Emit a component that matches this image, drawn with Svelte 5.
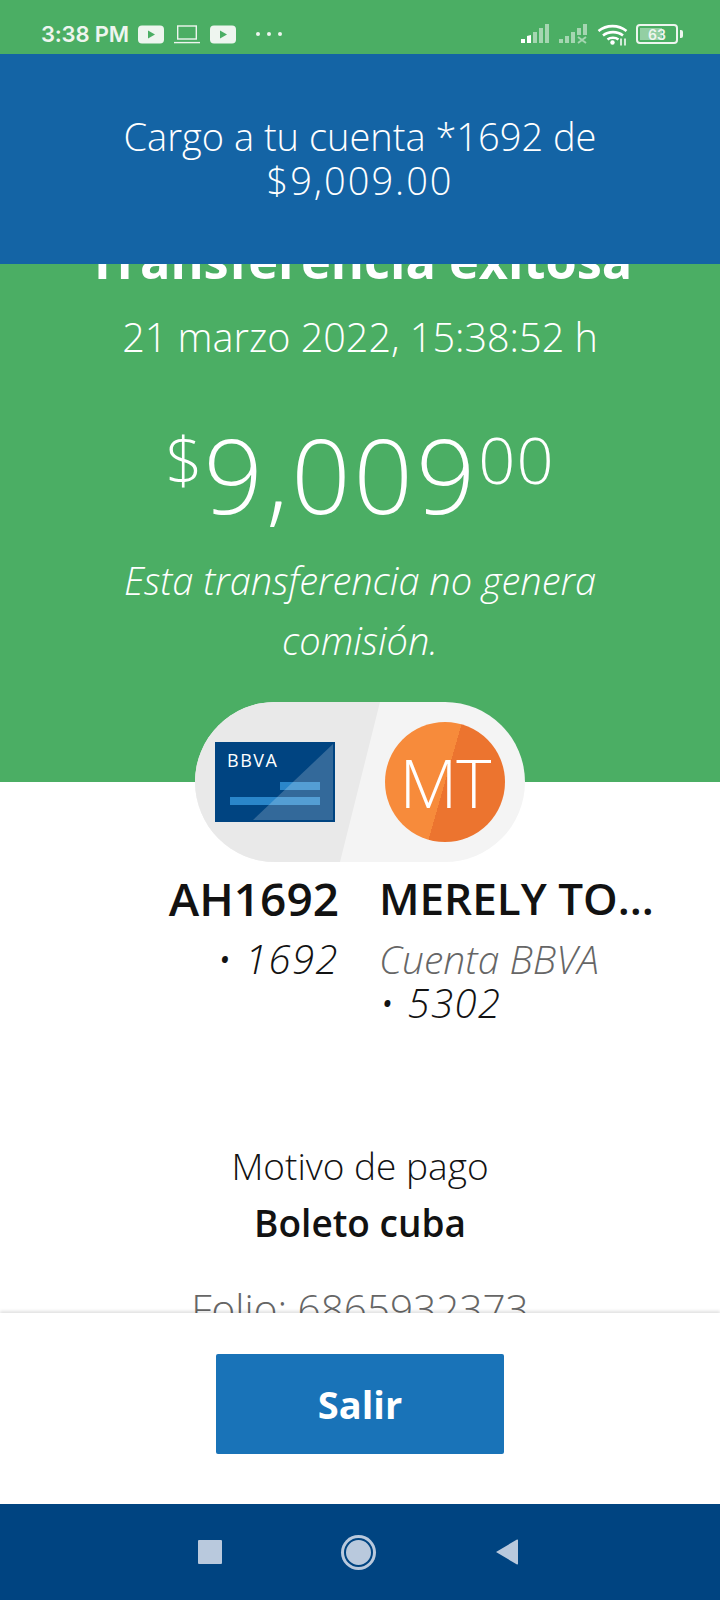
<script lang="ts">
  const title = "Transferencia exitosa";
</script>

<div class="screen">
  <header class="status">
    <span class="time">3:38 PM</span>
    <svg class="yt" viewBox="0 0 26 19"><rect width="26" height="18" y="0.5" rx="4" fill="#eef5ef" /><path d="M10 5.5l7 4-7 4z" fill="#4bae64" /></svg>
    <svg class="yt" viewBox="0 0 26 19" fill="none" stroke="#eef5ef" stroke-width="1.4"><rect x="3.7" y="1" width="18.6" height="13" /><path d="M0 17.6h26" /></svg>
    <svg class="yt" viewBox="0 0 26 19"><rect width="26" height="18" y="0.5" rx="4" fill="#eef5ef" /><path d="M10 5.5l7 4-7 4z" fill="#4bae64" /></svg>
    <span class="dots"><i></i><i></i><i></i></span>
    <span class="spacer"></span>
    <svg class="sig" viewBox="0 0 28 20">
      <rect x="0" y="15" width="4" height="4" fill="#fff" />
      <path d="M6 19v-7l4-1v8z" fill="#fff" />
      <rect x="12" y="8" width="4" height="11" fill="#a5d6b1" />
      <rect x="18" y="4" width="4" height="15" fill="#a5d6b1" />
      <rect x="24" y="0" width="4" height="19" fill="#a5d6b1" />
    </svg>
    <svg class="sig" viewBox="0 0 28 20">
      <rect x="0" y="15" width="4" height="4" fill="#a5d6b1" />
      <rect x="6" y="12" width="4" height="7" fill="#a5d6b1" />
      <rect x="12" y="8" width="4" height="11" fill="#a5d6b1" />
      <rect x="18" y="4" width="4" height="7" fill="#a5d6b1" />
      <rect x="24" y="0" width="4" height="11" fill="#a5d6b1" />
      <path d="M19 13l8 6M27 13l-8 6" stroke="#a5d6b1" stroke-width="2" />
    </svg>
    <svg class="wifi" viewBox="0 0 32 22" fill="none" stroke="#fff" stroke-width="2.6">
      <path d="M1.5 7.5c8-6.500 20-6.500 28 0" />
      <path d="M6 12c5.500-4.500 14.500-4.500 20 0" />
      <path d="M10.500 16c2.800-2.300 8-2.300 11 0" />
      <circle cx="15.500" cy="19" r="2.200" fill="#fff" stroke="none" />
      <path d="M24 15v7M28 15v7" stroke-width="1.500" />
    </svg>
    <span class="battery"><span class="level"></span><span class="pct">63</span></span>
    <span class="nub"></span>
  </header>

  <main class="content">
    <div class="toast">Cargo a tu cuenta *1692 de<br /><span class="toast-amount">$9,009.00</span></div>

    <section class="hero">
      <h1>{title}</h1>
      <p class="date">21 marzo 2022, 15:38:52 h</p>
      <p class="amount"><sup>$</sup>9,009<sup>00</sup></p>
      <p class="note">Esta transferencia no genera comisión.</p>
    </section>

    <div class="pill">
      <div class="side left">
        <svg class="card" viewBox="0 0 120 80">
          <rect width="120" height="80" fill="#004481" />
          <rect x="65" y="40" width="40" height="8" fill="#2a86ca" />
          <rect x="15" y="55" width="90" height="8" fill="#2a86ca" />
          <path d="M38 78L118 2v76z" fill="#fff" opacity="0.2" />
          <text x="12" y="25" class="bbva">BBVA</text>
        </svg>
      </div>
      <div class="side right">
        <div class="avatar">
          <span>MT</span>
        </div>
      </div>
    </div>

    <div class="parties">
      <div class="from">
        <strong>AH1692</strong>
        <em class="num">• 1692</em>
      </div>
      <div class="to">
        <strong>MERELY TO...</strong>
        <em class="grey">Cuenta BBVA</em>
        <em class="num">• 5302</em>
      </div>
    </div>

    <section class="reason">
      <p>Motivo de pago</p>
      <strong>Boleto cuba</strong>
      <p class="folio">Folio: 6865932373</p>
    </section>
  </main>

  <footer class="actions">
    <button>Salir</button>
  </footer>

  <nav class="navbar">
    <span class="square"></span>
    <span class="home"></span>
    <svg class="back" viewBox="0 0 24 28"><path d="M1 14L22 1.500a.8.8 0 0 1 1 .8v23.400a.8.800 0 0 1-1 .8z" fill="#b9c9dd" /></svg>
  </nav>
</div>

<style>
  :global(body) {
    margin: 0;
  }

  .screen {
    width: 720px;
    height: 1600px;
    display: flex;
    flex-direction: column;
    overflow: hidden;
    background: #fff;
    color: #121212;
    font-family: "Open Sans", sans-serif;
  }

  .status {
    height: 54px;
    flex-shrink: 0;
    display: flex;
    align-items: center;
    gap: 10px;
    padding: 14px 37px 0 41px;
    box-sizing: border-box;
    background: #4bae64;
    color: #eef5ef;
    font-family: Inter, sans-serif;
  }

  .time {
    width: 87px;
    font-size: 22px;
    font-weight: 600;
    white-space: nowrap;
    letter-spacing: -0.2px;
  }

  .yt {
    width: 26px;
    height: 19px;
  }

  .dots {
    display: flex;
    gap: 7px;
    margin-left: 10px;
  }

  .dots i {
    width: 4px;
    height: 4px;
    border-radius: 50%;
    background: #eef5ef;
  }

  .spacer {
    flex: 1;
  }

  .sig {
    width: 28px;
    height: 20px;
  }

  .wifi {
    width: 32px;
    height: 23px;
    margin-right: -3px;
  }

  .battery {
    position: relative;
    width: 38px;
    height: 16px;
    border: 2px solid #eef5ef;
    border-radius: 4px;
    display: flex;
    align-items: center;
    justify-content: center;
  }

  .level {
    position: absolute;
    left: 2px;
    top: 2px;
    bottom: 2px;
    width: 22px;
    background: #93cfa3;
  }

  .pct {
    position: relative;
    font-size: 14px;
    font-weight: 600;
  }

  .nub {
    width: 3px;
    height: 8px;
    margin-left: -8px;
    background: #eef5ef;
    border-radius: 0 2px 2px 0;
  }

  .content {
    position: relative;
    flex: 1;
    min-height: 0;
    overflow: hidden;
  }

  .toast {
    position: absolute;
    top: 0;
    left: 0;
    right: 0;
    height: 210px;
    padding-top: 60px;
    box-sizing: border-box;
    background: #1464a5;
    color: #fff;
    text-align: center;
    font-size: 38px;
    font-weight: 300;
    line-height: 44px;
  }

  .toast-amount {
    letter-spacing: 2px;
  }

  .hero {
    height: 728px;
    padding-top: 176px;
    box-sizing: border-box;
    background: #4bae64;
    color: #fff;
    text-align: center;
  }

  h1 {
    margin: 0;
    font-size: 50.5px;
    line-height: 60px;
    font-weight: 700;
  }

  .date {
    margin: 25px 0 0;
    font-size: 39.6px;
    line-height: 44px;
    font-weight: 300;
  }

  .amount {
    margin: 53px 0 0;
    font-size: 104px;
    line-height: 124px;
    font-weight: 300;
    letter-spacing: 3px;
  }

  .amount sup {
    font-size: 65px;
    line-height: 0;
    vertical-align: 30px;
    letter-spacing: 1px;
  }

  .note {
    width: 520px;
    margin: 14px auto 0;
    font-size: 38px;
    line-height: 60px;
    font-style: italic;
    font-weight: 300;
  }

  .pill {
    width: 330px;
    height: 160px;
    margin: -80px auto 0;
    display: flex;
    border-radius: 80px;
    overflow: hidden;
    background: #f4f4f4;
  }

  .side {
    display: flex;
    align-items: center;
  }

  .left {
    width: 185px;
    box-sizing: border-box;
    padding-left: 20px;
    background: #e9e9e9;
    clip-path: polygon(0 0, 100% 0, 145px 100%, 0 100%);
  }

  .card {
    width: 120px;
    height: 80px;
    display: block;
  }

  .bbva {
    font-family: "Open Sans", sans-serif;
    font-size: 18px;
    fill: #fff;
    font-weight: 500;
    letter-spacing: 1.5px;
  }

  .right {
    flex: 1;
    padding-left: 5px;
  }

  .avatar {
    width: 120px;
    height: 120px;
    border-radius: 50%;
    background: linear-gradient(106deg, #f78b3b 0 50%, #ec742f 50%);
    color: #fff;
    display: flex;
    align-items: center;
    justify-content: center;
    font-size: 67px;
    font-weight: 300;
    letter-spacing: -1px;
  }

  .parties {
    display: grid;
    grid-template-columns: 339px 1fr;
    gap: 40px;
    margin-top: 8px;
  }

  .from {
    text-align: right;
  }

  .parties strong,
  .parties em {
    display: block;
  }

  .parties strong {
    font-size: 44px;
    line-height: 56px;
    font-weight: 600;
    white-space: nowrap;
  }

  .from strong {
    font-size: 46px;
  }

  .parties em {
    font-size: 39px;
    line-height: 44px;
    font-weight: 300;
  }

  .parties em.num {
    font-size: 40px;
    letter-spacing: 1.5px;
  }

  .parties strong + em {
    margin-top: 11px;
  }

  .grey {
    color: #666;
  }

  .reason {
    margin-top: 119px;
    text-align: center;
  }

  .reason p {
    margin: 0;
    font-size: 37px;
    line-height: 44px;
    font-weight: 300;
  }

  .reason strong {
    display: block;
    margin-top: 13px;
    font-size: 37px;
    line-height: 44px;
    font-weight: 600;
  }

  .reason .folio {
    margin-top: 42px;
    font-size: 40.5px;
    color: #666;
  }

  .actions {
    height: 191px;
    flex-shrink: 0;
    display: flex;
    justify-content: center;
    padding-top: 41px;
    box-sizing: border-box;
    background: #fff;
    box-shadow: 0 -2px 3px rgba(0, 0, 0, 0.12);
    position: relative;
  }

  button {
    width: 288px;
    height: 100px;
    border: 0;
    border-radius: 2px;
    background: #1973b8;
    color: #fff;
    font-family: inherit;
    font-size: 38px;
    font-weight: 700;
  }

  .navbar {
    height: 96px;
    flex-shrink: 0;
    display: flex;
    align-items: center;
    justify-content: center;
    padding-right: 3px;
    gap: 119px;
    background: #004481;
    position: relative;
  }

  .square {
    width: 24px;
    height: 24px;
    background: #b9c9dd;
    border-radius: 1px;
  }

  .home {
    width: 25px;
    height: 25px;
    margin: 3px;
    border-radius: 50%;
    background: #b9c9dd;
    border: 2px solid #004481;
    box-shadow: 0 0 0 3px #b9c9dd;
    box-sizing: content-box;
  }

  .back {
    width: 24px;
    height: 28px;
  }
</style>
